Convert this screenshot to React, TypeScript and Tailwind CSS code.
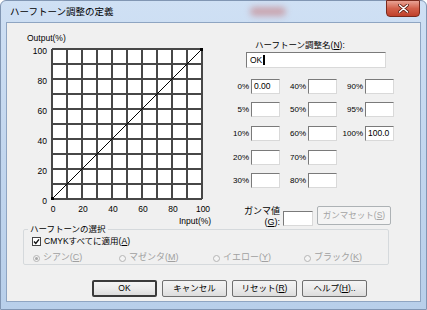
import React from 'react'

const FONT = "font-['Liberation_Sans','Noto_Sans_CJK_JP',sans-serif]"

function Chart() {
  const x0 = 32
  const y0 = 19
  const step = 15
  const lines = Array.from({ length: 11 }, (_, i) => i)
  const labels = [0, 20, 40, 60, 80, 100]
  const ff = 'Liberation Sans, Noto Sans CJK JP, sans-serif'
  return (
    <svg width="203" height="197" viewBox="0 0 203 197" className="mt-[7px] ml-[13px] shrink-0">
      <text x="7" y="11" fontSize="8.5" fontFamily={ff} fill="#000">Output(%)</text>
      <rect x={x0} y={y0} width={150} height={150} fill="#fff" />
      {lines.map(i => (
        <g key={i}>
          <line x1={x0 + i * step} y1={y0} x2={x0 + i * step} y2={y0 + 150} stroke="#474747" strokeWidth="2" />
          <line x1={x0} y1={y0 + i * step} x2={x0 + 150} y2={y0 + i * step} stroke="#474747" strokeWidth="2" />
        </g>
      ))}
      <line x1={x0} y1={y0 + 150} x2={x0 + 150} y2={y0} stroke="#000" strokeWidth="1" />
      <rect x={x0 - 1} y={y0 + 148} width="3" height="3" fill="#000" />
      <rect x={x0 + 148} y={y0 - 1} width="3" height="3" fill="#000" />
      {labels.map(v => (
        <text key={'y' + v} x="27" y={y0 + 150 - v * 1.5 + 5} fontSize="8.5" fontFamily={ff} textAnchor="end" fill="#000">{v}</text>
      ))}
      {labels.map(v => (
        <text key={'x' + v} x={x0 + v * 1.5 + 1} y="182" fontSize="8.5" fontFamily={ff} textAnchor="middle" fill="#000">{v}</text>
      ))}
      <text x="159" y="194" fontSize="8.5" fontFamily={ff} fill="#000">Input(%)</text>
    </svg>
  )
}

function Box({ value, w = 'w-[29px]' }: { value?: string; w?: string }) {
  return (
    <div className={`${w} h-[15px] bg-white border border-t-[#7a7a7a] border-l-[#7a7a7a] border-r-[#d9d9d9] border-b-[#d9d9d9] text-[8.5px] leading-[13px] pl-[2px]`}>
      {value}
    </div>
  )
}

function Cell({ label, value }: { label?: string; value?: string }) {
  if (!label) return <div className="w-[57px]" />
  return (
    <div className="w-[57px] flex items-center">
      <span className="w-[26px] text-right text-[8px] leading-[15px]">{label}</span>
      <div className="ml-[2px]"><Box value={value} /></div>
    </div>
  )
}

function Radio({ checked, label, k, w }: { checked?: boolean; label: string; k: string; w: string }) {
  return (
    <div className={`${w} flex items-center gap-[3px] text-[#a0a0a0] text-[9px]`}>
      <svg width="7" height="7" viewBox="0 0 7 7" className="ml-[1px]">
        <circle cx="3.5" cy="3.5" r="3" fill="#f4f4f4" stroke="#b4b4b4" strokeWidth="1" />
        {checked && <circle cx="3.5" cy="3.5" r="1.5" fill="#a8a8a8" />}
      </svg>
      <span>{label}(<span className="underline">{k}</span>)</span>
    </div>
  )
}

function Button({ children, def }: { children: React.ReactNode; def?: boolean }) {
  return (
    <div className={`w-[65px] h-[17px] rounded-[2px] flex items-center justify-center text-[8.5px] bg-gradient-to-b from-[#f4f4f4] via-[#ebebeb] to-[#dcdcdc] ${def ? 'border-2 border-[#3a3a3a]' : 'border border-[#6f6f6f]'}`}>
      {children}
    </div>
  )
}

export default function App() {
  const rows: [string, string, string, string, string, string][] = [
    ['0%', '0.00', '40%', '', '90%', ''],
    ['5%', '', '50%', '', '95%', ''],
    ['10%', '', '60%', '', '100%', '100.0'],
    ['20%', '', '70%', '', '', ''],
    ['30%', '', '80%', '', '', ''],
  ]
  const rowMt = ['mt-[11px]', 'mt-[8px]', 'mt-[9px]', 'mt-[9px]', 'mt-[8px]']
  return (
    <div className={`w-[427px] h-[310px] ${FONT} text-black bg-gradient-to-b from-[#cfe0f4] via-[#c2d6ee] to-[#b8cfea] border border-[#8196b3] rounded-t-[6px] px-[5px] pb-[7px] flex flex-col`}>
      {/* title bar */}
      <div className="h-[21px] flex items-start relative">
        <span className="text-[9.5px] leading-[21px] pl-[4px]">ハーフトーン調整の定義</span>
        <div className="absolute left-[244px] top-[6px] w-[36px] h-[9px] rounded-full bg-[#c46a6a] opacity-50 blur-[3px]" />
        <div className="ml-auto mr-[1px] -mt-[1px] w-[34px] h-[17px] rounded-b-[4px] border border-[#7a2a1c] bg-gradient-to-b from-[#e8a294] via-[#d2604a] to-[#c0402a] flex items-center justify-center">
          <svg width="11" height="9" viewBox="0 0 11 9">
            <path d="M1.5 1 L9.5 8 M9.5 1 L1.5 8" stroke="#5a1b10" strokeWidth="3" strokeLinecap="round" />
            <path d="M1.5 1 L9.5 8 M9.5 1 L1.5 8" stroke="#fff" strokeWidth="1.6" strokeLinecap="round" />
          </svg>
        </div>
      </div>

      {/* client area */}
      <div className="flex-1 bg-[#f0f0f0] border border-[#8fa5c2] flex flex-col text-[8.5px]">
        <div className="h-[204px] flex">
          <Chart />
          <div className="flex flex-col pt-[16px]">
            <div className="pl-[32px] leading-[12px] h-[12px]">
              ハーフトーン調整名(<span className="underline">N</span>):
            </div>
            <div className="ml-[23px] mt-[1px] w-[140px] h-[16px] bg-white border border-t-[#7a7a7a] border-l-[#7a7a7a] border-r-[#d9d9d9] border-b-[#d9d9d9] flex items-center pl-[3px]">
              <span className="text-[8.5px]">OK</span>
              <span className="w-[2px] h-[10px] bg-black ml-[1px]" />
            </div>
            {rows.map((r, i) => (
              <div key={i} className={`flex h-[15px] ${rowMt[i]}`}>
                <Cell label={r[0]} value={r[1]} />
                <Cell label={r[2]} value={r[3]} />
                <Cell label={r[4]} value={r[5]} />
              </div>
            ))}
            <div className="flex mt-[17px] h-[22px]">
              <div className="w-[57px] text-right leading-[11px] pt-[1px] text-[9px]">
                <div>ガンマ値</div>
                <div>(<span className="underline">G</span>):</div>
              </div>
              <div className="ml-[3px] mt-[6px]"><Box w="w-[30px]" /></div>
              <div className="ml-[4px] mt-[1px] w-[74px] h-[19px] rounded-[2px] border border-[#adb2b5] bg-[#f4f4f4] text-[#a3a3a3] flex items-center justify-center">
                ガンマセット(<span className="underline">S</span>)
              </div>
            </div>
          </div>
        </div>

        <fieldset className="-mt-[4px] ml-[16px] w-[366px] border border-[#d5d9dc] rounded-[2px] pl-[8px] pb-0">
          <legend className="-ml-[4px] px-[2px] leading-[12px]">ハーフトーンの選択</legend>
          <div className="h-[12px] flex items-center gap-[3px]">
            <svg width="9" height="9" viewBox="0 0 9 9">
              <rect x="0.5" y="0.5" width="8" height="8" fill="#fff" stroke="#444" />
              <path d="M2 4.5 L3.8 6.5 L7 2.3" stroke="#111" strokeWidth="1.4" fill="none" />
            </svg>
            <span>CMYKすべてに適用(<span className="underline">A</span>)</span>
          </div>
          <div className="h-[12px] mt-[5px] flex items-center">
            <Radio checked label="シアン" k="C" w="w-[86px]" />
            <Radio label="マゼンタ" k="M" w="w-[94px]" />
            <Radio label="イエロー" k="Y" w="w-[91px]" />
            <Radio label="ブラック" k="K" w="w-[80px]" />
          </div>
        </fieldset>

        <div className="mt-[15px] ml-[85px] flex gap-[5px]">
          <Button def>OK</Button>
          <Button>キャンセル</Button>
          <Button>リセット(<span className="underline">R</span>)</Button>
          <Button>ヘルプ(<span className="underline">H</span>)..</Button>
        </div>
      </div>
    </div>
  )
}
